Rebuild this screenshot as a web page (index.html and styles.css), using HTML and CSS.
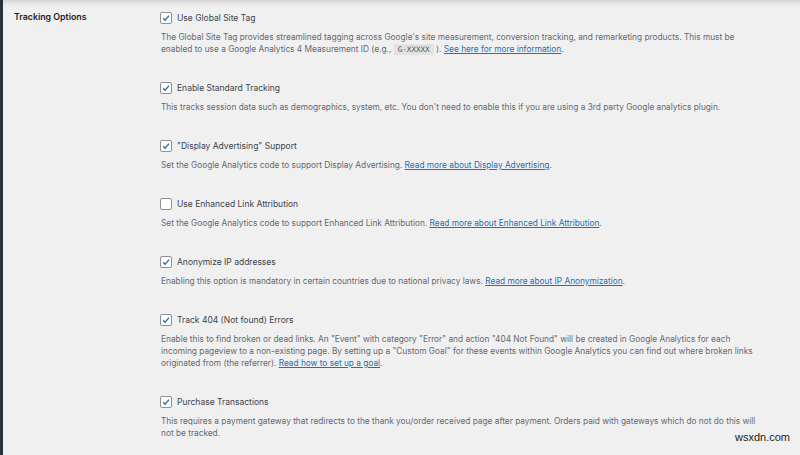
FILE: index.html
```html
<!DOCTYPE html>
<html lang="en">

<head>
    <meta charset="UTF-8">
    <meta name="viewport" content="width=device-width, initial-scale=1.0">
    <title>Tracking Options</title>
    <link rel="stylesheet" href="styles.css">
</head>

<body>
    <div class="frame">
        <div class="settings">
            <div class="row-title">Tracking Options</div>
            <div class="row-fields">
                <div class="option">
                    <label class="check-label"><span class="box checked"><svg viewBox="0 0 12 12"><path d="M2.6 6.2 L5 8.6 L9.6 3.2" /></svg></span>Use Global Site Tag</label>
                    <p class="desc">The Global Site Tag provides streamlined tagging across Google's site measurement, conversion tracking, and remarketing products. This must be enabled to use a Google Analytics 4 Measurement ID (e.g., <code>G-XXXXX</code> ). <a href="#">See here for more information</a>.</p>
                </div>
                <div class="option">
                    <label class="check-label"><span class="box checked"><svg viewBox="0 0 12 12"><path d="M2.6 6.2 L5 8.6 L9.6 3.2" /></svg></span>Enable Standard Tracking</label>
                    <p class="desc">This tracks session data such as demographics, system, etc. You don't need to enable this if you are using a 3rd party Google analytics plugin.</p>
                </div>
                <div class="option">
                    <label class="check-label"><span class="box checked"><svg viewBox="0 0 12 12"><path d="M2.6 6.2 L5 8.6 L9.6 3.2" /></svg></span>"Display Advertising" Support</label>
                    <p class="desc">Set the Google Analytics code to support Display Advertising. <a href="#">Read more about Display Advertising</a>.</p>
                </div>
                <div class="option">
                    <label class="check-label"><span class="box"></span>Use Enhanced Link Attribution</label>
                    <p class="desc">Set the Google Analytics code to support Enhanced Link Attribution. <a href="#">Read more about Enhanced Link Attribution</a>.</p>
                </div>
                <div class="option">
                    <label class="check-label"><span class="box checked"><svg viewBox="0 0 12 12"><path d="M2.6 6.2 L5 8.6 L9.6 3.2" /></svg></span>Anonymize IP addresses</label>
                    <p class="desc">Enabling this option is mandatory in certain countries due to national privacy laws. <a href="#">Read more about IP Anonymization</a>.</p>
                </div>
                <div class="option">
                    <label class="check-label"><span class="box checked"><svg viewBox="0 0 12 12"><path d="M2.6 6.2 L5 8.6 L9.6 3.2" /></svg></span>Track 404 (Not found) Errors</label>
                    <p class="desc">Enable this to find broken or dead links. An "Event" with category "Error" and action "404 Not Found" will be created in Google Analytics for each incoming pageview to a non-existing page. By setting up a "Custom Goal" for these events within Google Analytics you can find out where broken links originated from (the referrer). <a href="#">Read how to set up a goal</a>.</p>
                </div>
                <div class="option">
                    <label class="check-label"><span class="box checked"><svg viewBox="0 0 12 12"><path d="M2.6 6.2 L5 8.6 L9.6 3.2" /></svg></span>Purchase Transactions</label>
                    <p class="desc">This requires a payment gateway that redirects to the thank you/order received page after payment. Orders paid with gateways which do not do this will not be tracked.</p>
                </div>
            </div>
        </div>
        <div class="watermark">wsxdn.com</div>
    </div>
</body>

</html>
```

FILE: styles.css
```css
html,
body {
    margin: 0;
    padding: 0;
    height: 100%;
}

body {
    font-family: Inter, "Liberation Sans", Arial, sans-serif;
    background-color: #f0f0f1;
    color: #3c434a;
    overflow: hidden;
}

.frame {
    position: relative;
    height: 455px;
    border-left: 3px solid #2c3338;
    box-sizing: border-box;
    background: linear-gradient(#d4d4d6 0, #eaeaeb 4px, #f0f0f1 8px);
}

.settings {
    display: grid;
    grid-template-columns: 146px 1fr;
    padding: 12px 0 0 11px;
}

.row-title {
    font-size: 8.8px;
    font-weight: 600;
    color: #1d2327;
    line-height: 10px;
}

.option {
    margin-bottom: 27px;
}

.check-label {
    display: flex;
    align-items: center;
    gap: 5px;
    font-size: 8.5px;
    line-height: 12px;
    color: #3c434a;
}

.box {
    width: 10px;
    height: 10px;
    border: 1px solid #8c8f94;
    border-radius: 2px;
    background: #fff;
    flex: none;
    display: flex;
}

.box svg {
    width: 10px;
    height: 10px;
}

.box path {
    fill: none;
    stroke: #2271b1;
    stroke-width: 1.6;
}

.desc {
    margin: 7px 0 0 1px;
    font-size: 8.3px;
    line-height: 12px;
    color: #646970;
    max-width: 600px;
}

.desc a {
    color: #2271b1;
    text-decoration: underline;
}

code {
    font-family: "DejaVu Sans Mono", "Liberation Mono", monospace;
    font-size: 7.6px;
    line-height: 1;
    background: #e2e2e3;
    padding: 1px 4px;
    color: #50575e;
}

.watermark {
    position: absolute;
    right: 10px;
    bottom: 12px;
    font-size: 11px;
    color: #222;
    font-family: "Liberation Sans", Arial, sans-serif;
}
```
